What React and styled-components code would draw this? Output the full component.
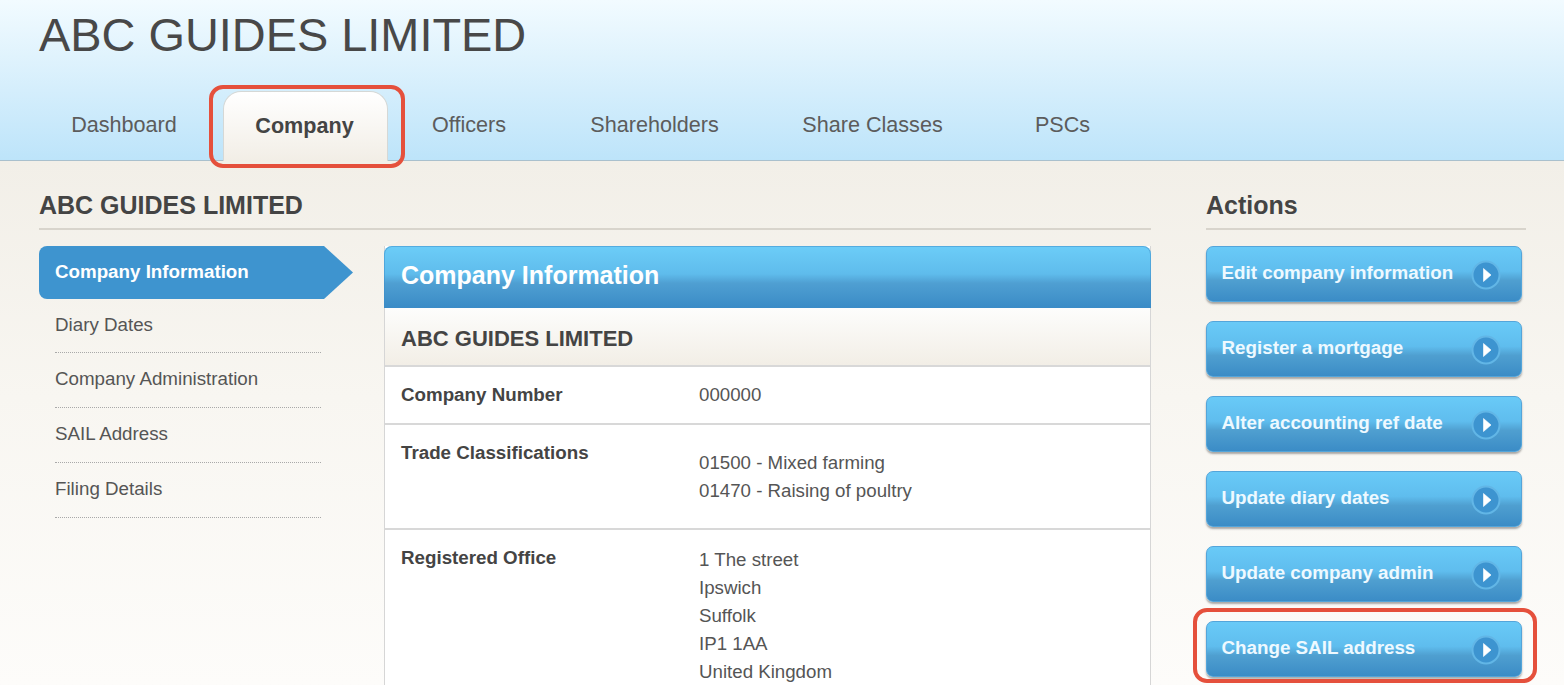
import React from "react";
import styled, { createGlobalStyle } from "styled-components";

const Global = createGlobalStyle`
  html, body { margin: 0; padding: 0; height: 685px; overflow: hidden; background: #fbfaf7; }
  body { font-family: "Liberation Sans", Arial, sans-serif; color: #444; }
`;
const Page = styled.div`position: relative; width: 1564px; height: 685px; overflow: hidden;`;
const Header = styled.header`
  height: 161px; box-sizing: border-box; padding: 0 39px;
  background: linear-gradient(#f2fbff 0%, #e0f3fd 35%, #bde4fa 100%);
  border-bottom: 1px solid #a9c0cd;
  display: flex; flex-direction: column;
`;
const Title = styled.h1`
  margin: 9px 0 0; font-size: 46.9px; line-height: 52px; font-weight: 400; color: #484848; white-space: nowrap;
`;
const Tabs = styled.nav`display: flex; margin-top: 30px; align-items: flex-end; height: 69px;`;
const Tab = styled.a`
  box-sizing: border-box; height: 69px; width: ${p => p.$w}px; flex: none;
  margin-right: ${p => p.$gap || 0}px;
  display: flex; align-items: center; justify-content: center; padding-bottom: 1px;
  font-size: 21.6px; color: #5c5c5c; font-weight: 400;
  white-space: nowrap;
  ${p => p.$active && `
    color: #444; font-weight: 700; font-size: 21.6px; padding-bottom: 2px; padding-right: 2px;
    background: linear-gradient(#ffffff 0%, #f2eee6 100%);
    border: 1px solid #d5d8d6; border-bottom: none; border-radius: 18px 18px 0 0;
    height: 70px; margin-bottom: -1px;
  `}
`;
const Body = styled.main`
  height: 524px; box-sizing: border-box; padding: 28px 38px 0 39px;
  background: linear-gradient(#f2efe8 0%, #f8f6f1 45%, #fdfcfa 100%);
  display: flex; gap: 55px;
`;
const Left = styled.div`width: 1112px; flex: none;`;
const Right = styled.aside`width: 320px; flex: none;`;
const SectionTitle = styled.h2`
  margin: 0; height: 41px; box-sizing: border-box; padding-top: 1px; border-bottom: 2px solid #d8d4cc;
  font-size: 25px; line-height: 30px; font-weight: 700; color: #444; white-space: nowrap;
`;
const Columns = styled.div`display: flex; gap: 31px; margin-top: 16px;`;
const SideNav = styled.ul`list-style: none; margin: 0; padding: 0; width: 314px; flex: none;`;
const ActiveItem = styled.li`
  height: 53px; box-sizing: border-box; padding: 12px 0 0 16px; background: #3e94cf; color: #fff;
  font-size: 18.75px; line-height: 28px; font-weight: 700; white-space: nowrap;
  clip-path: polygon(0 0, 285px 0, 100% 50%, 285px 100%, 0 100%);
  border-radius: 8px 0 0 8px;
`;
const NavItem = styled.li`
  height: 55px; box-sizing: border-box; margin-left: 16px; width: 266px; padding-top: 13px;
  border-bottom: 1px dotted #a9a9a9; font-size: 18.75px; line-height: 26px; color: #555; white-space: nowrap;
  &:nth-child(2) { height: 54px; }
`;
const Panel = styled.section`
  width: 767px; flex: none; box-sizing: border-box; background: #fff;
  border: 1px solid #d6d6d6; border-top: none; border-bottom: none;
`;
const PanelHead = styled.div`
  margin: 0 -1px; height: 62px; box-sizing: border-box; padding: 12px 0 0 17px;
  border-radius: 8px 8px 0 0; color: #fff; font-size: 25px; line-height: 34px; font-weight: 700;
  background: linear-gradient(#6ccdf8 0%, #5fbcec 45%, #4f9fd2 60%, #3a8bc6 100%);
  box-shadow: inset 0 0 0 1px rgba(60,140,200,.5);
`;
const PanelSub = styled.div`
  height: 59px; box-sizing: border-box; padding: 16px 0 0 16px; border-bottom: 2px solid #d8d8d8;
  background: linear-gradient(#fdfdfc 0%, #f2eee6 100%);
  font-size: 22px; line-height: 30px; font-weight: 700; color: #444;
`;
const Row = styled.div`
  display: flex; height: ${p => p.$h}px; box-sizing: border-box; padding: 14px 0 0 16px;
  border-bottom: 2px solid #d8d8d8;
`;
const RowLabel = styled.div`width: 298px; flex: none; font-size: 18.75px; line-height: 28px; font-weight: 700; color: #444;`;
const RowValue = styled.div`font-size: 18.7px; line-height: 28px; color: #555; padding-top: ${p => p.$top || 0}px;`;
const ActionList = styled.div`display: flex; flex-direction: column; gap: 19px; margin-top: 16px;`;
const ActionButton = styled.a`
  width: 316px; height: 56px; box-sizing: border-box; flex: none; display: flex; align-items: center;
  justify-content: space-between; padding: 0 20px 2px 14.5px;
  border-radius: 7px; border: 1px solid #54a5da; color: #eef9ff; font-size: 18.8px; font-weight: 700; white-space: nowrap;
  background: linear-gradient(#69caf7 0%, #5fbdee 45%, #4f9fd0 62%, #3b8cc6 100%);
  box-shadow: 0 2px 2px rgba(70,70,70,.45);
`;
const ArrowIcon = styled.svg`width: 30px; height: 30px; flex: none; margin-top: 3px;`;
const Highlight = styled.div`
  position: absolute; left: ${p => p.$x}px; top: ${p => p.$y}px; width: ${p => p.$w}px; height: ${p => p.$h}px;
  box-sizing: border-box; border: 4px solid #e5503c; border-radius: 14px; pointer-events: none;
`;

const actions = ["Edit company information", "Register a mortgage", "Alter accounting ref date", "Update diary dates", "Update company admin", "Change SAIL address"];
const tabs = [
  { label: "Dashboard", w: 170, gap: 14 },
  { label: "Company", w: 165, active: true },
  { label: "Officers", w: 162 },
  { label: "Shareholders", w: 209 },
  { label: "Share Classes", w: 227 },
  { label: "PSCs", w: 153 },
];

export default function App() {
  return (
    <Page>
      <Global />
      <Header>
        <Title>ABC GUIDES LIMITED</Title>
        <Tabs>
          {tabs.map(t => <Tab key={t.label} $w={t.w} $gap={t.gap} $active={t.active}>{t.label}</Tab>)}
        </Tabs>
      </Header>
      <Body>
        <Left>
          <SectionTitle>ABC GUIDES LIMITED</SectionTitle>
          <Columns>
            <SideNav>
              <ActiveItem>Company Information</ActiveItem>
              <NavItem>Diary Dates</NavItem>
              <NavItem>Company Administration</NavItem>
              <NavItem>SAIL Address</NavItem>
              <NavItem>Filing Details</NavItem>
            </SideNav>
            <Panel>
              <PanelHead>Company Information</PanelHead>
              <PanelSub>ABC GUIDES LIMITED</PanelSub>
              <Row $h={58}>
                <RowLabel>Company Number</RowLabel>
                <RowValue>000000</RowValue>
              </Row>
              <Row $h={105}>
                <RowLabel>Trade Classifications</RowLabel>
                <RowValue $top={10}>01500 - Mixed farming<br />01470 - Raising of poultry</RowValue>
              </Row>
              <Row $h={200}>
                <RowLabel>Registered Office</RowLabel>
                <RowValue $top={2}>1 The street<br />Ipswich<br />Suffolk<br />IP1 1AA<br />United Kingdom</RowValue>
              </Row>
            </Panel>
          </Columns>
        </Left>
        <Right>
          <SectionTitle>Actions</SectionTitle>
          <ActionList>
            {actions.map(a => (
              <ActionButton key={a}>
                {a}
                <ArrowIcon viewBox="0 0 30 30">
                  <circle cx="15" cy="15" r="13.5" fill="#3d94d0" stroke="#62b6e6" strokeWidth="2" />
                  <path d="M12.5 8.5 L20 15 L12.5 21.5 Z" fill="#fff" stroke="#fff" strokeLinejoin="round" strokeWidth="0.6" />
                </ArrowIcon>
              </ActionButton>
            ))}
          </ActionList>
        </Right>
      </Body>
      <Highlight $x={209} $y={85} $w={196} $h={83} />
      <Highlight $x={1193} $y={608} $w={344} $h={75} />
    </Page>
  );
}
